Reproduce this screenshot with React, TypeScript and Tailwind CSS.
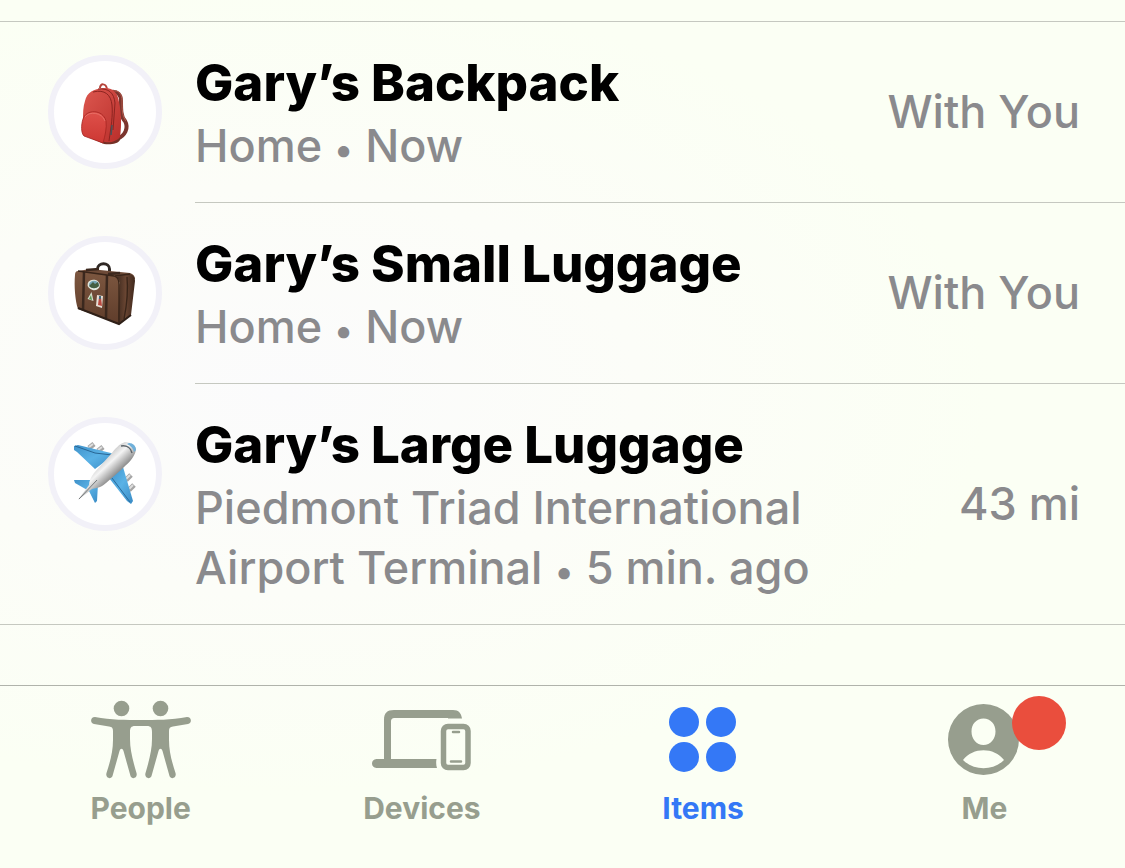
import type { ReactNode } from "react";
import clsx from "clsx";

const BackpackIcon = () => (
  <svg viewBox="0 0 130 130" className="size-[130px] shrink-0" aria-hidden="true">
    <defs>
      <linearGradient id="bag" x1="0" y1="0" x2="1" y2="1">
        <stop offset="0" stopColor="#dd5850" />
        <stop offset="1" stopColor="#b92f2b" />
      </linearGradient>
      <linearGradient id="pocket" x1="0" y1="0" x2="0" y2="1">
        <stop offset="0" stopColor="#de504a" />
        <stop offset="1" stopColor="#cd3833" />
      </linearGradient>
    </defs>
    <path d="M71 45c7-1 10 3 10 9c0 9 0 16 4 20c4 7 0 15-8 18" fill="none" stroke="#7b352e" strokeWidth="4" />
    <path d="M72 44c7-1 10 3 10 10c0 8 0 15 4 20" fill="none" stroke="#b55a4b" strokeWidth="1" />
    <path d="M60 41c0-5 6-5 7 1" fill="none" stroke="#b5433a" strokeWidth="2" />
    <path d="M44 88l20 9c6 1 14 0 16-4v-6l-36-1z" fill="#743026" />
    <path d="M45 54c2-9 9-12 18-13c10-1 15 5 16 14c2 10 3 22 1 35c-3 4-9 6-15 5l-21-8c-3-2-2-9-1-14c0-7 0-13 2-19z" fill="url(#bag)" />
    <path d="M53 45c12-3 18 3 19 13c1 11-1 22-3 36" fill="none" stroke="#8c2420" strokeWidth="1" />
    <path d="M58 42c11-1 16 4 17 14l-2 27" fill="none" stroke="#8c2420" strokeWidth="1" />
    <path d="M72 78l-1 10" stroke="#4b5158" strokeWidth="1.5" />
    <path d="M43 72c3-10 20-10 23 2c1 7-1 15-3 22l-19-7c-3-3-3-11-1-17z" fill="url(#pocket)" stroke="#a52521" strokeWidth=".8" />
    <path d="M45 70c4-6 17-5 20 4" fill="none" stroke="#ee7c72" strokeWidth=".7" />
  </svg>
);

const LuggageIcon = () => (
  <svg viewBox="0 0 130 130" className="size-[130px] shrink-0" aria-hidden="true">
    <defs>
      <linearGradient id="leather" x1="0" y1="0" x2="0" y2="1">
        <stop offset="0" stopColor="#7d5740" />
        <stop offset="1" stopColor="#5f3d2b" />
      </linearGradient>
      <linearGradient id="side" x1="0" y1="0" x2="1" y2="0">
        <stop offset="0" stopColor="#3b281d" />
        <stop offset=".5" stopColor="#694532" />
        <stop offset="1" stopColor="#3f281c" />
      </linearGradient>
    </defs>
    <path d="M57.500 44v-3c0-7 12-7 12 0v5" fill="none" stroke="#302925" strokeWidth="3" />
    <path d="M38 43l12-2l40 4c3 1 5 3 5 6l-19 4z" fill="#6d4a37" />
    <path d="M38 43l36 5c4 2 6 5 6 9l0 39l-42-15c-3-8-4-24-3-34q0-4 3-4z" fill="url(#leather)" />
    <path d="M76 49l14-3c3 1 5 3 5 7l-4 34l-11 9c-2-1-2-4-2-8l2-32c0-4-2-6-4-7z" fill="url(#side)" />
    <path d="M44 44l-1 38M67 47l-1 43M46 42l13-1M68 46l12-1" fill="none" stroke="#3b281e" strokeWidth="2.500" />
    <path d="M38 43l36 5c3 1 5 4 5 8l0 39M75 48l15-2M87 49c1 10 0 27-3 42" fill="none" stroke="#392519" strokeWidth="1.300" />
    <path d="M38 80l41 16l12-9" fill="none" stroke="#2f2018" strokeWidth="2" />
    <ellipse cx="53.700" cy="57" rx="6.200" ry="5.200" fill="#e3e9df" transform="rotate(12 54 57)" />
    <ellipse cx="54" cy="56.500" rx="5" ry="3.700" fill="#78a5b5" />
    <path d="M49 58l4-4l2 2l3-2l1 4c-3 3-7 3-10 0z" fill="#455f42" />
    <path d="M51.500 64l-4 7l6 2z" fill="#d5dfcf" />
    <path d="M51 67l-2 4l3 1z" fill="#5b9651" />
    <path d="M57 67l6 1l-1 12l-6-2z" fill="#e6dfd6" />
    <path d="M59 69l2 0l1 9l-4-1z" fill="#b94a40" />
    <path d="M59 68h2v3h-2z" fill="#426778" />
  </svg>
);

const PlaneIcon = () => (
  <svg viewBox="0 0 130 130" className="size-[130px] shrink-0" aria-hidden="true">
    <defs>
      <linearGradient id="wing" x1="0" y1="0" x2="1" y2="1">
        <stop offset="0" stopColor="#3f91c9" />
        <stop offset=".5" stopColor="#5ab2e6" />
        <stop offset="1" stopColor="#398bc5" />
      </linearGradient>
      <linearGradient id="hull" gradientUnits="userSpaceOnUse" x1="62" y1="50" x2="76" y2="65">
        <stop offset="0" stopColor="#c9c9c9" />
        <stop offset=".4" stopColor="#f4f4f4" />
        <stop offset="1" stopColor="#8f8f8f" />
      </linearGradient>
    </defs>
    <g stroke="#a5a5a5" strokeWidth="5">
      <path d="M49 39l5-4M58 42l5-4M86 71l5-5M89 81l5-5" />
    </g>
    <g stroke="#dedede" strokeWidth="2">
      <path d="M49 38l4-3M58 41l4-3M86 70l4-4M89 80l4-4" />
    </g>
    <path d="M34 37l4-1l37 9l-20 15l-18-17l-3-2z" fill="url(#wing)" />
    <path d="M83 58l10 34l-2 3l-4-3l-18-23z" fill="url(#wing)" />
    <path d="M34 71l20 0l4 4l-1 17l-2 2l-6-12l-14-8z" fill="url(#wing)" />
    <path d="M35 37l20 7l17 2" fill="none" stroke="#286694" />
    <path d="M72 69l18 24" stroke="#286a9b" />
    <path d="M85 33c7 0 11 4 11 8c-2 9-9 14-15 20l-15 13c-4 4-9 5-14 6l-14 11l11-15c0-4 2-8 5-12l17-19c4-5 8-10 14-12z" fill="url(#hull)" />
    <path d="M89 34c4 0 7 3 7 7l-2 2c-1-4-3-6-7-8z" fill="#6fb0da" />
    <path d="M81 37c6-1 10 2 11 7" fill="none" stroke="#5f666b" strokeWidth="1.500" />
    <path d="M39 90l18-19" stroke="#737779" />
  </svg>
);

const PeopleIcon = () => (
  <svg viewBox="0 0 100 80" className="h-20 w-[100px]" fill="currentColor" aria-hidden="true">
    <circle cx="30.500" cy="8.500" r="7.800" />
    <circle cx="69.500" cy="8.500" r="7.800" />
    <path d="M4 17C20 20 35 20 50 20S80 20 96 17C101 17 101 23 97 24L82 26.500C79 27 78 28 78 31V40C78 52 81 62 84.500 73C86 78 80 80 78.500 76L71.500 51C70.500 48 68.500 48 67.500 51L60.500 76C59 80 53 78 54.500 73C58 61 61 50 61 39V32C61 28 60 26 56 26H44C40 26 39 28 39 32V39C39 50 42 61 45.500 73C47 78 41 80 39.500 76L32.500 51C31.500 48 29.500 48 28.500 51L21.500 76C20 80 14 78 15.500 73C19 62 22 52 22 40V31C22 28 21 27 18 26.500L3 24C-1 23-1 17 4 17Z" />
  </svg>
);

const DevicesIcon = () => (
  <svg viewBox="0 0 100 80" className="h-20 w-[100px]" fill="none" stroke="currentColor" aria-hidden="true">
    <path d="M12 59V20C12 13 15 10 22 10H81C87 10 89 13 90 18.500H76V18H23C20 18 19 19 19 22V59H64.500C64 62 64 65 65 68H4.500C-1.500 68-1.500 59 4.500 59Z" fill="currentColor" stroke="none" />
    <rect x="71.500" y="26.500" width="24.500" height="41" rx="4.500" strokeWidth="5.500" />
    <path d="M81 32h6M79 61.500h10" strokeWidth="2.500" strokeLinecap="round" />
  </svg>
);

const ItemsIcon = () => (
  <svg viewBox="0 0 100 80" className="h-20 w-[100px]" fill="currentColor" aria-hidden="true">
    <circle cx="31" cy="22" r="15" />
    <circle cx="68" cy="22" r="15" />
    <circle cx="31" cy="57" r="15" />
    <circle cx="68" cy="57" r="15" />
  </svg>
);

const MeIcon = () => (
  <svg viewBox="0 0 100 80" className="h-20 w-[100px]" fill="currentColor" aria-hidden="true">
    <path
      fillRule="evenodd"
      d="M49.500 4a35.500 35.500 0 1 0 0 71a35.500 35.500 0 1 0 0-71ZM49.500 18.500c7 0 12 5.500 12 13s-5 13.500-12 13.500s-12-6-12-13.500s5-13 12-13ZM29 60C39 47 60 47 70 60C59 71 40 71 29 60Z"
    />
  </svg>
);

type Item = {
  name: string;
  place: string;
  seen: string;
  distance: string;
  icon: ReactNode;
};

const items: Item[] = [
  { name: "Gary’s Backpack", place: "Home", seen: "Now", distance: "With You", icon: <BackpackIcon /> },
  { name: "Gary’s Small Luggage", place: "Home", seen: "Now", distance: "With You", icon: <LuggageIcon /> },
  {
    name: "Gary’s Large Luggage",
    place: "Piedmont Triad International Airport Terminal",
    seen: "5 min. ago",
    distance: "43 mi",
    icon: <PlaneIcon />,
  },
];

const tabs = [
  { label: "People", icon: <PeopleIcon /> },
  { label: "Devices", icon: <DevicesIcon /> },
  { label: "Items", icon: <ItemsIcon />, active: true },
  { label: "Me", icon: <MeIcon />, badge: true },
];

const ItemRow = ({ item, last }: { item: Item; last: boolean }) => (
  <li className="flex items-start pl-12">
    <div className="mt-[33px] mr-[33px] flex size-[114px] shrink-0 items-center justify-center rounded-full border-6 border-[#f2f1f8] bg-white">
      {item.icon}
    </div>
    <div className={clsx("flex flex-1 items-center justify-between pr-[45px]", !last && "border-b border-[#c5c8c0]")}>
      <div className="max-w-[640px] pt-[30px] pb-[26px]">
        <h2 className="text-[51px] leading-[62px] font-extrabold text-black">{item.name}</h2>
        <p className="mt-0.5 text-[45px] leading-[60px] font-medium text-[#8a8a8d]">
          {item.place} <span className="text-[36px] leading-none">•</span> {item.seen}
        </p>
      </div>
      <p className="text-[45px] leading-[60px] font-medium whitespace-nowrap text-[#8a8a8d]">{item.distance}</p>
    </div>
  </li>
);

export default function App() {
  return (
    <div
      className="min-h-screen bg-[#fbfff4] bg-[radial-gradient(ellipse_at_25%_45%,#fbfbfc_0%,#fcfdf8_30%,transparent_60%)] pt-[21px]"
      style={{ fontFamily: "Inter, 'Liberation Sans', sans-serif" }}
    >
      <main>
        <ul className="border-y border-[#c5c8c0]">
          {items.map((item, i) => (
            <ItemRow key={item.name} item={item} last={i === items.length - 1} />
          ))}
        </ul>
      </main>

      <nav className="mt-[60px] grid grid-cols-4 border-t border-[#b0b3ab] pt-[14px] pb-7">
        {tabs.map((tab) => (
          <button
            key={tab.label}
            type="button"
            aria-current={tab.active ? "page" : undefined}
            className={clsx("flex flex-col items-center", tab.active ? "text-[#3478f6]" : "text-[#979e8e]")}
          >
            <span className="relative">
              {tab.icon}
              {tab.badge && <span className="absolute -top-1 -right-8 size-[54px] rounded-full bg-[#ea4e3d]" />}
            </span>
            <span className="mt-2.5 text-[30px] leading-9 font-bold">{tab.label}</span>
          </button>
        ))}
      </nav>
    </div>
  );
}
